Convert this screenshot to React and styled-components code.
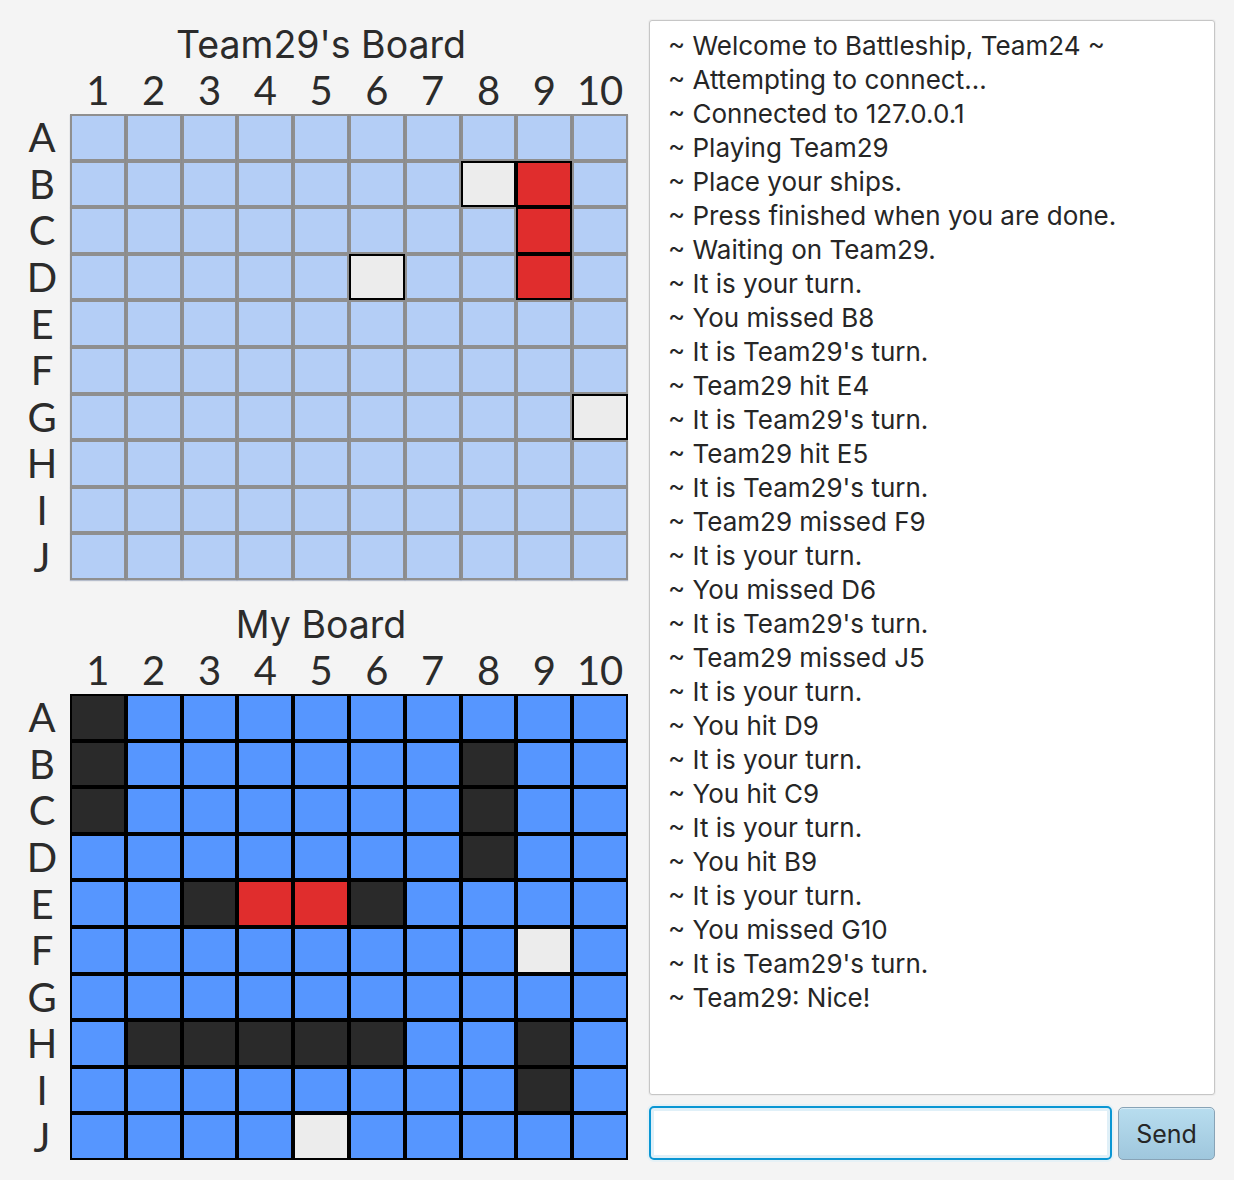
import React from "react";
import styled, { createGlobalStyle, css } from "styled-components";

const GlobalStyle = createGlobalStyle`
  html, body { margin: 0; padding: 0; background: #f4f4f4; }
  body { font-family: Inter, "Liberation Sans", sans-serif; color: #2b2b2b; }
  * { box-sizing: border-box; }
`;

const Page = styled.div`
  display: flex;
  align-items: stretch;
  width: 1234px;
  height: 1180px;
  padding: 20px 19px 20px 0;
`;

const LeftColumn = styled.div`
  width: 649px;
  flex: none;
  display: flex;
  flex-direction: column;
  gap: 20px;
  padding-left: 14px;
`;

const BoardSection = styled.section`
  width: 614px;
  display: flex;
  flex-direction: column;
`;

const BoardTitle = styled.h2`
  margin: 0;
  height: 50px;
  line-height: 50px;
  text-align: center;
  font-family: Inter, "Liberation Sans", sans-serif;
  font-weight: 400;
  font-size: 37.5px;
  color: #2b2b2b;
`;

const Grid = styled.div`
  display: grid;
  grid-template-columns: 56px repeat(10, minmax(0, 1fr));
  grid-template-rows: 44px repeat(10, minmax(0, 1fr));
  height: 510px;
`;

const ColLabel = styled.div`
  font-family: Lato, "Open Sans", sans-serif;
  font-size: 40px;
  line-height: 40px;
  text-align: center;
  color: #2b2b2b;
`;

const RowLabel = styled.div`
  display: flex;
  align-items: center;
  justify-content: center;
  font-family: Lato, "Open Sans", sans-serif;
  font-size: 40px;
  line-height: 40px;
  color: #2b2b2b;
  min-height: 0;
  overflow: visible;
`;

const palette = {
  enemy: { water: "#b4cef6", miss: "#ececec", hit: "#e02d2d", ship: "#2a2a2a" },
  mine: { water: "#5696ff", miss: "#ececec", hit: "#e02d2d", ship: "#2a2a2a" },
};

const Cell = styled.div`
  min-height: 0;
  border: 2px solid ${(p) => (p.$board === "enemy" && p.$state === "water" ? "#8f8f8f" : "#000")};
  background: ${(p) => palette[p.$board][p.$state]};
  ${(p) =>
    p.$board === "enemy" &&
    p.$state === "water" &&
    css`
      box-shadow: 0 1px 1px rgba(70, 90, 130, 0.35);
    `}
  position: relative;
  z-index: ${(p) => (p.$state === "water" ? 0 : 1)};
`;

const RightColumn = styled.div`
  flex: 1;
  display: flex;
  flex-direction: column;
  gap: 11px;
`;

const ChatLog = styled.div`
  flex: 1;
  background: #fff;
  border: 1px solid #c6c6c6;
  border-radius: 3px;
  box-shadow: 0 0 0 1px #ececec;
  padding: 8px 18px;
  font-family: Inter, "Liberation Sans", sans-serif;
  font-size: 26px;
  line-height: 34px;
  color: #262626;
`;

const ChatLine = styled.div`
  white-space: nowrap;
`;

const InputRow = styled.div`
  display: flex;
  gap: 6px;
  height: 54px;
`;

const ChatInput = styled.input`
  flex: 1;
  min-width: 0;
  height: 54px;
  border: 2px solid #0a96d3;
  border-radius: 5px;
  background: #fff;
  box-shadow: inset 0 0 0 3px #e0f0f8, 0 0 0 2px #e6f1f6;
  outline: none;
  font-family: Inter, "Liberation Sans", sans-serif;
  font-size: 25px;
  padding: 0 10px;
`;

const SendButton = styled.button`
  width: 97px;
  height: 53px;
  margin-top: 1px;
  border: 1px solid #88a3b6;
  border-radius: 5px;
  background: linear-gradient(#b8ddef, #9fc7dd);
  box-shadow: inset 0 1px 0 rgba(255, 255, 255, 0.45);
  font-family: Inter, "Liberation Sans", sans-serif;
  font-size: 25px;
  color: #262626;
  padding: 0;
  cursor: pointer;
`;

const rows = ["A", "B", "C", "D", "E", "F", "G", "H", "I", "J"];
const cols = [1, 2, 3, 4, 5, 6, 7, 8, 9, 10];

const enemyMarks = {
  B8: "miss",
  B9: "hit",
  C9: "hit",
  D9: "hit",
  D6: "miss",
  G10: "miss",
};

const myMarks = {
  A1: "ship",
  B1: "ship",
  C1: "ship",
  B8: "ship",
  C8: "ship",
  D8: "ship",
  E3: "ship",
  E4: "hit",
  E5: "hit",
  E6: "ship",
  F9: "miss",
  H2: "ship",
  H3: "ship",
  H4: "ship",
  H5: "ship",
  H6: "ship",
  H9: "ship",
  I9: "ship",
  J5: "miss",
};

const messages = [
  "~ Welcome to Battleship, Team24 ~",
  "~ Attempting to connect...",
  "~ Connected to 127.0.0.1",
  "~ Playing Team29",
  "~ Place your ships.",
  "~ Press finished when you are done.",
  "~ Waiting on Team29.",
  "~ It is your turn.",
  "~ You missed B8",
  "~ It is Team29's turn.",
  "~ Team29 hit E4",
  "~ It is Team29's turn.",
  "~ Team29 hit E5",
  "~ It is Team29's turn.",
  "~ Team29 missed F9",
  "~ It is your turn.",
  "~ You missed D6",
  "~ It is Team29's turn.",
  "~ Team29 missed J5",
  "~ It is your turn.",
  "~ You hit D9",
  "~ It is your turn.",
  "~ You hit C9",
  "~ It is your turn.",
  "~ You hit B9",
  "~ It is your turn.",
  "~ You missed G10",
  "~ It is Team29's turn.",
  "~ Team29: Nice!",
];

function Board({ title, board, marks }) {
  return (
    <BoardSection>
      <BoardTitle>{title}</BoardTitle>
      <Grid>
        <div />
        {cols.map((c) => (
          <ColLabel key={c}>{c}</ColLabel>
        ))}
        {rows.map((r) => (
          <React.Fragment key={r}>
            <RowLabel>{r}</RowLabel>
            {cols.map((c) => (
              <Cell key={r + c} $board={board} $state={marks[r + c] || "water"} />
            ))}
          </React.Fragment>
        ))}
      </Grid>
    </BoardSection>
  );
}

export default function App() {
  return (
    <>
      <GlobalStyle />
      <Page>
        <LeftColumn>
          <Board title="Team29's Board" board="enemy" marks={enemyMarks} />
          <Board title="My Board" board="mine" marks={myMarks} />
        </LeftColumn>
        <RightColumn>
          <ChatLog>
            {messages.map((m, i) => (
              <ChatLine key={i}>{m}</ChatLine>
            ))}
          </ChatLog>
          <InputRow>
            <ChatInput type="text" />
            <SendButton>Send</SendButton>
          </InputRow>
        </RightColumn>
      </Page>
    </>
  );
}
